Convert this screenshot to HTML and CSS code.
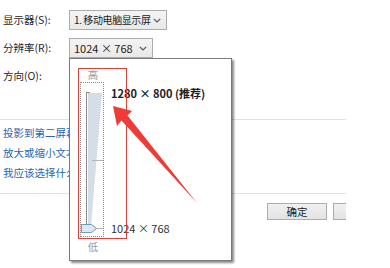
FILE: index.html
```html
<!DOCTYPE html>
<html lang="zh-CN">
<head>
    <meta charset="UTF-8">
    <meta name="viewport" content="width=device-width, initial-scale=1.0">
    <title>屏幕分辨率</title>
    <link rel="stylesheet" href="styles.css">
</head>
<body>
    <div class="screen">
        <div class="panel">
            <!-- Display settings -->
            <div class="field">
                <span class="label">显示器(S):</span>
                <div class="select select-wide">
                    <span>1. 移动电脑显示屏</span>
                    <svg class="chev" width="8" height="5" viewBox="0 0 8 5"><path d="M0.8 0.8 L4 4 L7.2 0.8" fill="none" stroke="#555" stroke-width="1.2"/></svg>
                </div>
            </div>
            <div class="field">
                <span class="label">分辨率(R):</span>
                <div class="select select-narrow">
                    <span>1024 × 768</span>
                    <svg class="chev" width="8" height="5" viewBox="0 0 8 5"><path d="M0.8 0.8 L4 4 L7.2 0.8" fill="none" stroke="#555" stroke-width="1.2"/></svg>
                </div>
            </div>
            <div class="field">
                <span class="label">方向(O):</span>
            </div>

            <div class="rule rule-top"></div>

            <ul class="links">
                <li><a href="#">投影到第二屏幕</a></li>
                <li><a href="#">放大或缩小文本和其他项目</a></li>
                <li><a href="#">我应该选择什么显示器设置?</a></li>
            </ul>

            <div class="rule rule-bottom"></div>

            <div class="actions">
                <button type="button">确定</button>
                <button type="button" aria-label="取消"></button>
            </div>
        </div>

        <!-- Resolution dropdown -->
        <div class="popup">
            <div class="scale">
                <span class="scale-end">高</span>
                <div class="slider">
                    <svg width="22" height="153" viewBox="0 0 22 153">
                        <line x1="5.5" y1="9" x2="5.5" y2="146" stroke="#8c8c8c" stroke-width="1"/>
                        <line x1="5" y1="9.5" x2="9" y2="9.5" stroke="#8c8c8c" stroke-width="1"/>
                        <polygon points="7,10 21,10 10,144 7,144" fill="#d5dee6"/>
                        <line x1="11" y1="77.5" x2="22" y2="77.5" stroke="#b5b5b5" stroke-width="1"/>
                        <line x1="15" y1="145.5" x2="22" y2="145.5" stroke="#b5b5b5" stroke-width="1"/>
                        <polygon points="0.5,141.5 10.5,141.5 15.5,145.5 10.5,149.5 0.5,149.5" fill="#dce8f2" stroke="#7199b8" stroke-width="1"/>
                    </svg>
                </div>
                <span class="scale-end">低</span>
            </div>
            <div class="options">
                <span class="option option-best">1280 × 800 (推荐)</span>
                <span class="option">1024 × 768</span>
            </div>
        </div>

        <!-- Annotation -->
        <div class="mark"></div>
        <svg class="arrow" width="390" height="268" viewBox="0 0 390 268">
            <polygon points="113,106 132,111 127.5,115.5 197,203 121.5,120.5 117,126" fill="#f03a35"/>
        </svg>
    </div>
</body>
</html>
```

FILE: styles.css
```css
* {
    box-sizing: border-box;
}

body {
    margin: 0;
    background: #ffffff;
    font-family: "Noto Sans CJK SC", "Noto Sans", sans-serif;
    font-size: 10.5px;
    color: #262626;
}

.screen {
    position: relative;
    width: 390px;
    height: 268px;
    overflow: hidden;
}

.panel {
    width: 346px;
    padding-top: 10px;
    overflow: hidden;
}

.field {
    display: flex;
    align-items: center;
    height: 20px;
    margin-bottom: 8px;
    padding-left: 3px;
}

.label {
    width: 66px;
    line-height: 14px;
    white-space: nowrap;
}

.select {
    display: flex;
    align-items: center;
    justify-content: space-between;
    height: 20px;
    padding: 0 5px 0 4px;
    border: 1px solid #acacac;
    background: linear-gradient(#f4f4f4, #e9e9e9);
    line-height: 14px;
    white-space: nowrap;
    color: #222;
}

.select .chev {
    flex: none;
}

.select-wide {
    width: 98px;
    font-size: 10px;
    letter-spacing: -0.4px;
}

.select-narrow {
    width: 84px;
    font-size: 11px;
}

.rule {
    height: 1px;
    background: #e2e2e2;
}

.rule-top {
    margin-top: 33px;
}

.links {
    list-style: none;
    margin: 3px 0 10px;
    padding: 0 0 0 3px;
}

.links li {
    height: 20px;
    line-height: 20px;
    white-space: nowrap;
}

.links a {
    color: #2867b2;
    text-decoration: none;
}

.actions {
    display: flex;
    gap: 6px;
    padding: 9px 0 0 267px;
}

.actions button {
    flex: none;
    width: 60px;
    height: 17px;
    padding: 0;
    border: 1px solid #adadad;
    background: linear-gradient(#f0f0f0, #e3e3e3);
    font-family: inherit;
    font-size: 10.5px;
    line-height: 15px;
    color: #222;
}

.popup {
    position: absolute;
    left: 69px;
    top: 58px;
    width: 163px;
    height: 203px;
    display: flex;
    gap: 7px;
    padding: 9px 0 0 10px;
    border: 1px solid #7a7a7a;
    background: #ffffff;
    box-shadow: 2px 2px 2px rgba(0, 0, 0, 0.45);
}

.scale {
    display: flex;
    flex-direction: column;
    align-items: center;
    width: 24px;
}

.scale-end {
    line-height: 14px;
    color: #9a9a9a;
    margin-left: 2px;
}

.slider {
    width: 24px;
    height: 155px;
    margin: 0 0 3px;
    border: 1px dotted #8a8a8a;
}

.slider svg {
    display: block;
}

.options {
    display: flex;
    flex-direction: column;
    gap: 121px;
    padding-top: 18px;
    font-size: 11px;
}

.option {
    line-height: 14px;
    white-space: nowrap;
    color: #333;
}

.option-best {
    font-weight: bold;
    color: #1e1e1e;
}

.mark {
    position: absolute;
    left: 78px;
    top: 68px;
    width: 49px;
    height: 171px;
    border: 1.5px solid #ec3a36;
}

.arrow {
    position: absolute;
    left: 0;
    top: 0;
}
```
